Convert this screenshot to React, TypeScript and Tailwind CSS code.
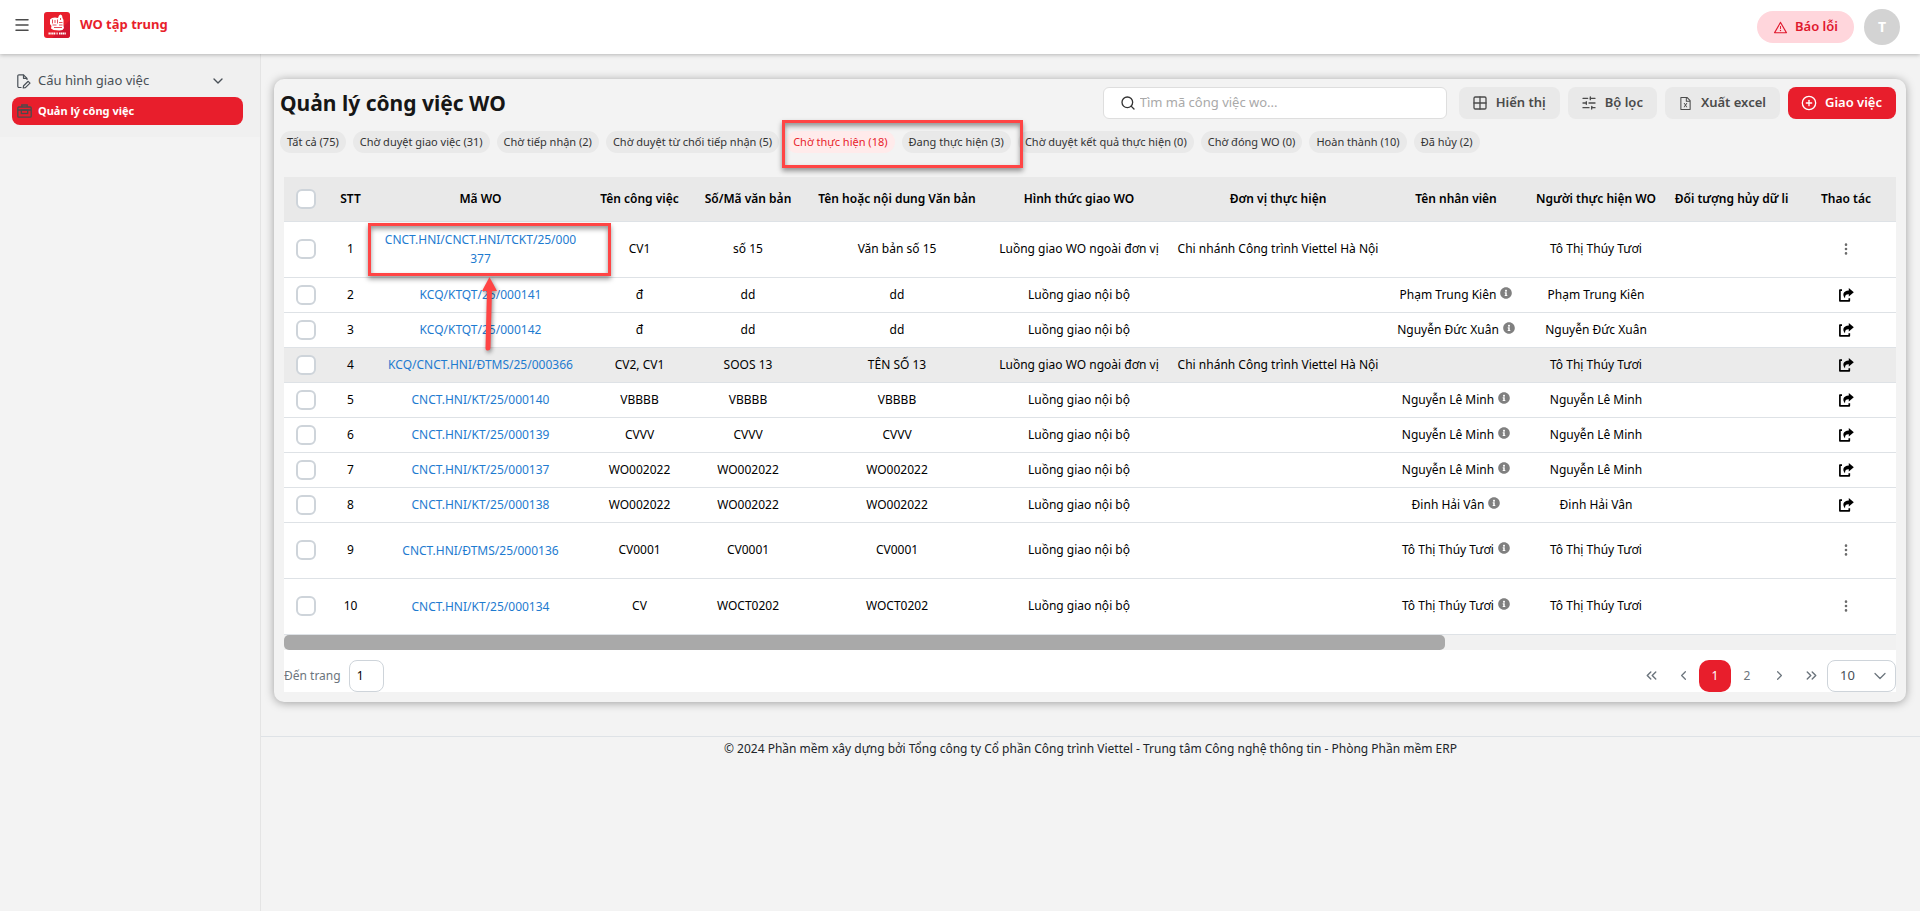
import { clsx } from "clsx";
import {
  ChevronDown,
  ChevronLeft,
  ChevronRight,
  ChevronsLeft,
  ChevronsRight,
  CirclePlus,
  Grid2x2,
  Menu,
  Search,
  SlidersHorizontal,
} from "lucide-react";
import { AiOutlineFileExcel, AiOutlineWarning } from "react-icons/ai";
import { BsThreeDotsVertical } from "react-icons/bs";
import { FaInfoCircle } from "react-icons/fa";

interface WorkOrder {
  code: string;
  task: string;
  docNo: string;
  docName: string;
  type: string;
  unit?: string;
  employee?: string;
  assignee: string;
  menu?: boolean;
}

const INTERNAL = "Luồng giao nội bộ";
const EXTERNAL = "Luồng giao WO ngoài đơn vị";
const BRANCH = "Chi nhánh Công trình Viettel Hà Nội";

const orders: WorkOrder[] = [
  { code: "CNCT.HNI/CNCT.HNI/TCKT/25/000377", task: "CV1", docNo: "số 15", docName: "Văn bản số 15", type: EXTERNAL, unit: BRANCH, assignee: "Tô Thị Thúy Tươi", menu: true },
  { code: "KCQ/KTQT/25/000141", task: "đ", docNo: "dd", docName: "dd", type: INTERNAL, employee: "Phạm Trung Kiên", assignee: "Phạm Trung Kiên" },
  { code: "KCQ/KTQT/25/000142", task: "đ", docNo: "dd", docName: "dd", type: INTERNAL, employee: "Nguyễn Đức Xuân", assignee: "Nguyễn Đức Xuân" },
  { code: "KCQ/CNCT.HNI/ĐTMS/25/000366", task: "CV2, CV1", docNo: "SOOS 13", docName: "TÊN SỐ 13", type: EXTERNAL, unit: BRANCH, assignee: "Tô Thị Thúy Tươi" },
  { code: "CNCT.HNI/KT/25/000140", task: "VBBBB", docNo: "VBBBB", docName: "VBBBB", type: INTERNAL, employee: "Nguyễn Lê Minh", assignee: "Nguyễn Lê Minh" },
  { code: "CNCT.HNI/KT/25/000139", task: "CVVV", docNo: "CVVV", docName: "CVVV", type: INTERNAL, employee: "Nguyễn Lê Minh", assignee: "Nguyễn Lê Minh" },
  { code: "CNCT.HNI/KT/25/000137", task: "WO002022", docNo: "WO002022", docName: "WO002022", type: INTERNAL, employee: "Nguyễn Lê Minh", assignee: "Nguyễn Lê Minh" },
  { code: "CNCT.HNI/KT/25/000138", task: "WO002022", docNo: "WO002022", docName: "WO002022", type: INTERNAL, employee: "Đinh Hải Vân", assignee: "Đinh Hải Vân" },
  { code: "CNCT.HNI/ĐTMS/25/000136", task: "CV0001", docNo: "CV0001", docName: "CV0001", type: INTERNAL, employee: "Tô Thị Thúy Tươi", assignee: "Tô Thị Thúy Tươi", menu: true },
  { code: "CNCT.HNI/KT/25/000134", task: "CV", docNo: "WOCT0202", docName: "WOCT0202", type: INTERNAL, employee: "Tô Thị Thúy Tươi", assignee: "Tô Thị Thúy Tươi", menu: true },
];

const headings = [
  "STT",
  "Mã WO",
  "Tên công việc",
  "Số/Mã văn bản",
  "Tên hoặc nội dung Văn bản",
  "Hình thức giao WO",
  "Đơn vị thực hiện",
  "Tên nhân viên",
  "Người thực hiện WO",
  "Đối tượng hủy dữ li",
  "Thao tác",
];

function Logo() {
  return (
    <svg width="26" height="26" viewBox="0 0 26 26" aria-hidden="true">
      <rect width="26" height="26" rx="3" fill="#e81e2c" />
      <path d="M26 8v15a3 3 0 0 1-3 3H8z" fill="#d3152f" />
      <path
        d="M6 7.500 8 6l3-.5 3 .5 1-2.500 1.500-1 1.500 1 .5 2.500 1 2v6l.5 2-1.500 2-3 .5-6-.5-2.500-1.500.5-2.500-1.500-2z"
        fill="#fff"
      />
      <path
        d="M8.500 7.500v4M11 8v3M13.500 7.500v4M16.500 6v2M8.500 13h4M15 10.500h3.500M15 13h3.500M10 15.500h8"
        stroke="#e0202f"
        strokeWidth=".8"
        fill="none"
      />
      <path d="M4.500 21.500h7M12.500 21.500h1.200M15 21.500h7" stroke="#fff" strokeWidth="1.800" strokeDasharray="1.400 .4" />
    </svg>
  );
}

function FilePenIcon() {
  return (
    <svg width="14" height="15" viewBox="0 0 14 15" fill="none" stroke="#495057" strokeWidth="1.200" strokeLinejoin="round" aria-hidden="true">
      <path d="M4.500 13.500H2A1.200 1.200 0 0 1 .8 12.300V2A1.200 1.200 0 0 1 2 .8h4.500L10 4.300V6" />
      <path d="M6.500.8v3.500H10" />
      <path d="m6.200 14 .4-2.300 4.600-4.400 1.800 1.800-4.600 4.500z" />
    </svg>
  );
}

function BriefcaseIcon() {
  return (
    <svg width="15" height="14" viewBox="0 0 15 14" fill="none" stroke="#4b4b4b" strokeWidth="1.300" aria-hidden="true">
      <rect x=".8" y="3" width="13.400" height="10.200" rx="1" />
      <path d="M4.800 3V1h5.400v2M.8 6h13.400" />
      <rect x="4.300" y="6" width="6.400" height="3.500" />
    </svg>
  );
}

function ShareIcon() {
  return (
    <svg width="16" height="14" viewBox="0 0 16 14" aria-hidden="true">
      <path
        d="M4 2.200H1.900V12.800H11.300V10.200"
        fill="none"
        stroke="currentColor"
        strokeWidth="1.700"
        strokeLinejoin="round"
      />
      <path
        d="M10.800 0 15.800 4.300 10.800 8.400V6.200C8.200 6.100 7 6.900 7 10.200 4.200 7.200 4.800 2.600 10.800 2.400z"
        fill="currentColor"
      />
    </svg>
  );
}

function Checkbox({ label }: { label: string }) {
  return (
    <input
      type="checkbox"
      aria-label={label}
      className="block mx-auto size-5 appearance-none rounded-md border-2 border-[#ced4da] bg-white"
    />
  );
}

function Chip({ label, active = false }: { label: string; active?: boolean }) {
  return (
    <button
      type="button"
      className={clsx(
        "h-[22px] rounded-full px-[7px] text-[11px] whitespace-nowrap",
        active ? "bg-[#ffebeb] text-[#e81e2c]" : "bg-[#e9e9e9] text-[#333]"
      )}
    >
      {label}
    </button>
  );
}

function Header() {
  return (
    <header className="relative z-10 flex h-[54px] items-center bg-white pr-5 pl-[13px] shadow-[0_1px_4px_rgba(0,0,0,0.25)]">
      <button type="button" aria-label="Menu" className="mb-1 text-[#4b4b4b]">
        <Menu size={18} strokeWidth={2} />
      </button>
      <a href="#" className="mb-1 ml-[13px] flex items-center gap-2.5 text-[13px] font-bold text-[#e81e2c]">
        <Logo />
        WO tập trung
      </a>
      <button
        type="button"
        className="ml-auto flex h-8 items-center gap-[7px] rounded-full bg-[#ffd6dc] px-4 text-[13px] font-semibold text-[#e0182d]"
      >
        <AiOutlineWarning size={15} />
        Báo lỗi
      </button>
      <button
        type="button"
        className="ml-2.5 size-9 rounded-full bg-[#d3d3d3] text-sm font-bold text-white"
      >
        T
      </button>
    </header>
  );
}

function Sidebar() {
  return (
    <aside className="w-[261px] shrink-0 border-r border-[#e4e4e4]">
      <nav className="bg-[#f0f0f0] px-3 pt-[14px] pb-3 text-[#495057]">
        <button type="button" className="flex h-[26px] w-full items-center gap-[7px] pr-[22px] pl-[5px] text-[13px]">
          <FilePenIcon />
          Cấu hình giao việc
          <ChevronDown size={16} className="ml-auto" />
        </button>
        <a
          href="#"
          className="mt-[3px] mr-[5px] flex h-7 items-center gap-1.5 rounded-lg bg-[#e81e2c] pl-[5px] text-[11px] font-bold text-white"
        >
          <BriefcaseIcon />
          Quản lý công việc
        </a>
      </nav>
    </aside>
  );
}

function Toolbar() {
  const button = "flex h-8 items-center gap-2 rounded-lg pr-[14px] pl-[13px] text-[13px] font-semibold whitespace-nowrap";
  return (
    <div className="flex items-center gap-2">
      <h1 className="text-[21px] leading-8 font-bold text-[#161616]">Quản lý công việc WO</h1>
      <label className="mr-1 ml-auto flex h-8 w-[344px] items-center gap-1 rounded-md border border-[#dedede] bg-white pl-4">
        <Search size={16} strokeWidth={2} className="text-[#333]" />
        <input
          type="text"
          aria-label="Tìm mã công việc"
          placeholder="Tìm mã công việc wo..."
          className="min-w-0 flex-1 bg-transparent text-[13px] outline-none placeholder:text-[#a9a9a9]"
        />
      </label>
      <button type="button" className={clsx(button, "bg-[#e9e9e9] text-[#4b4b4b]")}>
        <Grid2x2 size={16} strokeWidth={2} />
        Hiển thị
      </button>
      <button type="button" className={clsx(button, "bg-[#e9e9e9] text-[#4b4b4b]")}>
        <SlidersHorizontal size={16} strokeWidth={2} />
        Bộ lọc
      </button>
      <button type="button" className={clsx(button, "bg-[#e9e9e9] text-[#4b4b4b]")}>
        <AiOutlineFileExcel size={15} />
        Xuất excel
      </button>
      <button type="button" className={clsx(button, "bg-[#e81e2c] text-white")}>
        <CirclePlus size={16} strokeWidth={2} />
        Giao việc
      </button>
    </div>
  );
}

function StatusFilters() {
  return (
    <div className="mt-3 flex gap-[7px]">
      <Chip label="Tất cả (75)" />
      <Chip label="Chờ duyệt giao việc (31)" />
      <Chip label="Chờ tiếp nhận (2)" />
      <Chip label="Chờ duyệt từ chối tiếp nhận (5)" />
      <div className="relative flex gap-[7px]">
        <Chip label="Chờ thực hiện (18)" active />
        <Chip label="Đang thực hiện (3)" />
        {/* highlight frame */}
        <div className="pointer-events-none absolute -top-[11px] -right-3 -bottom-[15px] -left-1 z-10 border-3 border-[#ff4545] shadow-[0_3px_5px_rgba(0,0,0,0.4),inset_0_3px_5px_rgba(0,0,0,0.4)]" />
      </div>
      <Chip label="Chờ duyệt kết quả thực hiện (0)" />
      <Chip label="Chờ đóng WO (0)" />
      <Chip label="Hoàn thành (10)" />
      <Chip label="Đã hủy (2)" />
    </div>
  );
}

function CodeHighlight() {
  return (
    <>
      <div className="pointer-events-none absolute top-px -right-[23px] bottom-px -left-[5px] z-10 border-3 border-[#ff4545] shadow-[0_3px_5px_rgba(0,0,0,0.4),inset_0_3px_5px_rgba(0,0,0,0.4)]" />
      <svg
        width="24"
        height="80"
        viewBox="0 0 24 80"
        className="pointer-events-none absolute top-full left-1/2 z-10 -ml-1 drop-shadow-[1px_2px_2px_rgba(0,0,0,0.45)]"
        aria-hidden="true"
      >
        <path d="M12.500 0 20 14H5z" fill="#ff4545" />
        <path d="M12.500 12 11 71" stroke="#ff4545" strokeWidth="5" strokeLinecap="round" />
      </svg>
    </>
  );
}

function OrderTable() {
  return (
    <table className="w-full table-fixed border-collapse bg-white text-center text-xs text-black">
      <colgroup>
        <col className="w-[44px]" />
        <col className="w-[45px]" />
        <col className="w-[215px]" />
        <col className="w-[103px]" />
        <col className="w-[114px]" />
        <col className="w-[184px]" />
        <col className="w-[180px]" />
        <col className="w-[218px]" />
        <col className="w-[138px]" />
        <col className="w-[142px]" />
        <col className="w-[129px]" />
        <col className="w-[100px]" />
      </colgroup>
      <thead>
        <tr className="h-11 border-b border-[#dee2e6] bg-[#e9e9e9]">
          <th>
            <Checkbox label="Chọn tất cả" />
          </th>
          {headings.map((heading) => (
            <th key={heading} className="font-semibold whitespace-nowrap">
              {heading}
            </th>
          ))}
        </tr>
      </thead>
      <tbody>
        {orders.map((order, index) => (
          <tr
            key={order.code}
            className={clsx(
              "border-b border-[#dee2e6]",
              order.menu ? "h-14" : "h-[35px]",
              index === 3 && "bg-[#ebebeb]"
            )}
          >
            <td>
              <Checkbox label={`Chọn ${order.code}`} />
            </td>
            <td>{index + 1}</td>
            <td className="relative px-2.5 leading-[19px] break-all">
              <a href="#" className="text-[#1e7bd0]">
                {order.code}
              </a>
              {index === 0 && <CodeHighlight />}
            </td>
            <td>{order.task}</td>
            <td>{order.docNo}</td>
            <td>{order.docName}</td>
            <td className="whitespace-nowrap">{order.type}</td>
            <td className="whitespace-nowrap">{order.unit}</td>
            <td className="whitespace-nowrap">
              {order.employee && (
                <span className="inline-flex items-center gap-1">
                  {order.employee}
                  <FaInfoCircle size={12} className="mb-1 text-[#808080]" />
                </span>
              )}
            </td>
            <td className="whitespace-nowrap">{order.assignee}</td>
            <td />
            <td>
              <button type="button" aria-label="Thao tác" className="block mx-auto">
                {order.menu ? (
                  <BsThreeDotsVertical size={14} className="text-[#6b6b6b]" />
                ) : (
                  <ShareIcon />
                )}
              </button>
            </td>
          </tr>
        ))}
      </tbody>
    </table>
  );
}

function Pagination() {
  const page = "flex h-8 w-8 items-center justify-center rounded-[10px]";
  return (
    <div className="flex items-center bg-white pt-2.5 text-[#6c757d]">
      <label htmlFor="jump" className="text-xs">
        Đến trang
      </label>
      <input
        id="jump"
        type="text"
        defaultValue="1"
        className="ml-2 h-8 w-[35px] rounded-lg border border-[#ced4da] pl-[7px] text-xs text-black"
      />
      <div className="ml-auto flex text-xs">
        <button type="button" aria-label="Trang đầu" className={page}>
          <ChevronsLeft size={17} />
        </button>
        <button type="button" aria-label="Trang trước" className={page}>
          <ChevronLeft size={15} />
        </button>
        <button type="button" className={clsx(page, "bg-[#e81e2c] text-white")}>
          1
        </button>
        <button type="button" className={page}>
          2
        </button>
        <button type="button" aria-label="Trang sau" className={page}>
          <ChevronRight size={15} />
        </button>
        <button type="button" aria-label="Trang cuối" className={page}>
          <ChevronsRight size={17} />
        </button>
      </div>
      <div className="relative">
        <select
          aria-label="Số dòng mỗi trang"
          className="block h-8 w-[69px] appearance-none rounded-lg border border-[#ced4da] bg-white pl-3 text-[13px] text-[#495057]"
        >
          <option>10</option>
          <option>20</option>
          <option>50</option>
        </select>
        <ChevronDown size={20} strokeWidth={1.5} className="pointer-events-none absolute top-1.5 right-1.5" />
      </div>
    </div>
  );
}

export default function App() {
  return (
    <div className="flex min-h-screen flex-col bg-[#f3f3f3] font-['Noto_Sans','Open_Sans',sans-serif]">
      <Header />
      <div className="flex flex-1">
        <Sidebar />
        <div className="min-w-0 flex-1">
          <main className="mt-[25px] mr-[14px] ml-[13px] rounded-[10px] bg-[#f3f3f3] pt-2 pr-2.5 pb-2.5 pl-1.5 shadow-[0_1px_10px_rgba(0,0,0,0.35)]">
            <Toolbar />
            <StatusFilters />
            <section className="mt-6 ml-1">
              <OrderTable />
              {/* horizontal scrollbar */}
              <div className="h-[15px] bg-[#f1f1f1]">
                <div className="h-full w-[72%] rounded-[5px] bg-[#a9a9a9]" />
              </div>
              <Pagination />
            </section>
          </main>
          <footer className="mt-[34px] border-t border-[#dee2e6] pt-[3px] text-center text-xs leading-[18px] text-[#212529]">
            © 2024 Phần mềm xây dựng bởi Tổng công ty Cổ phần Công trình Viettel - Trung tâm Công nghệ thông tin - Phòng Phần mềm ERP
          </footer>
        </div>
      </div>
    </div>
  );
}
